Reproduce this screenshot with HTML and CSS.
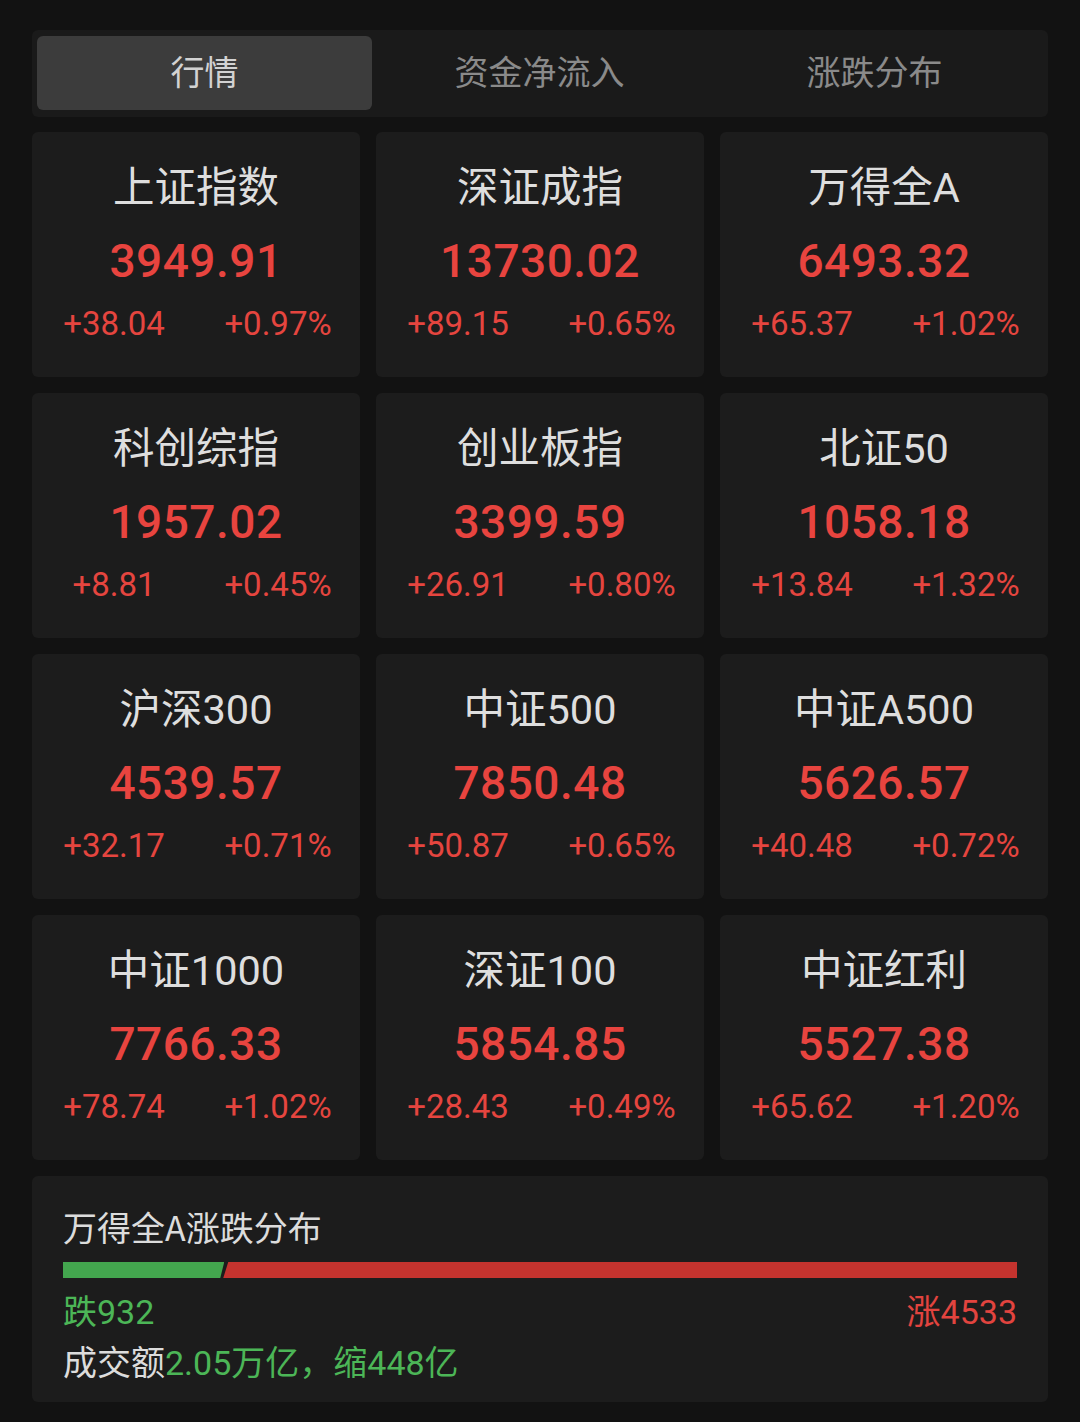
FILE: index.html
```html
<!DOCTYPE html>
<html lang="zh-CN">
<head>
<meta charset="utf-8">
<link rel="stylesheet" href="styles.css">
</head>
<body>
<div class="page">
  <div class="tabs">
    <div class="tab active">行情</div>
    <div class="tab">资金净流入</div>
    <div class="tab">涨跌分布</div>
  </div>
  <div class="grid">
    <div class="card"><div class="name">上证指数</div><div class="value">3949.91</div><div class="changes"><span>+38.04</span><span>+0.97%</span></div></div>
    <div class="card"><div class="name">深证成指</div><div class="value">13730.02</div><div class="changes"><span>+89.15</span><span>+0.65%</span></div></div>
    <div class="card"><div class="name">万得全A</div><div class="value">6493.32</div><div class="changes"><span>+65.37</span><span>+1.02%</span></div></div>
    <div class="card"><div class="name">科创综指</div><div class="value">1957.02</div><div class="changes"><span>+8.81</span><span>+0.45%</span></div></div>
    <div class="card"><div class="name">创业板指</div><div class="value">3399.59</div><div class="changes"><span>+26.91</span><span>+0.80%</span></div></div>
    <div class="card"><div class="name">北证50</div><div class="value">1058.18</div><div class="changes"><span>+13.84</span><span>+1.32%</span></div></div>
    <div class="card"><div class="name">沪深300</div><div class="value">4539.57</div><div class="changes"><span>+32.17</span><span>+0.71%</span></div></div>
    <div class="card"><div class="name">中证500</div><div class="value">7850.48</div><div class="changes"><span>+50.87</span><span>+0.65%</span></div></div>
    <div class="card"><div class="name">中证A500</div><div class="value">5626.57</div><div class="changes"><span>+40.48</span><span>+0.72%</span></div></div>
    <div class="card"><div class="name">中证1000</div><div class="value">7766.33</div><div class="changes"><span>+78.74</span><span>+1.02%</span></div></div>
    <div class="card"><div class="name">深证100</div><div class="value">5854.85</div><div class="changes"><span>+28.43</span><span>+0.49%</span></div></div>
    <div class="card"><div class="name">中证红利</div><div class="value">5527.38</div><div class="changes"><span>+65.62</span><span>+1.20%</span></div></div>
  </div>
  <div class="dist">
    <div class="dist-title">万得全A涨跌分布</div>
    <div class="bar"><div class="bar-down" style="width:16.9%"></div><div class="bar-up"></div></div>
    <div class="counts"><span class="down">跌932</span><span class="up">涨4533</span></div>
    <div class="turnover">成交额<span class="down">2.05万亿，缩448亿</span></div>
  </div>
</div>
</body>
</html>
```
FILE: styles.css
```css
* { box-sizing: border-box; }
html, body { margin: 0; padding: 0; }
body {
  background: #121212;
  width: 1080px;
  height: 1422px;
  overflow: hidden;
  font-family: Roboto, "Noto Sans CJK SC", sans-serif;
}
.page {
  padding: 30px 32px 0 32px;
}
.tabs {
  display: grid;
  grid-template-columns: repeat(3, 1fr);
  height: 87px;
  padding: 6px 6px 7px 5px;
  background: #1a1a1a;
  border-radius: 6px;
  margin-bottom: 15px;
}
.tab {
  display: flex;
  align-items: center;
  justify-content: center;
  padding-bottom: 5px;
  font-family: "Noto Sans CJK SC", sans-serif;
  font-size: 34px;
  color: #8a8a8a;
  border-radius: 6px;
}
.tab.active {
  background: #3c3c3c;
  color: #d2d2d2;
}
.grid {
  display: grid;
  grid-template-columns: repeat(3, 1fr);
  grid-auto-rows: 245px;
  column-gap: 16px;
  row-gap: 16px;
}
.card {
  background: #1c1c1c;
  border-radius: 6px;
  padding-top: 30px;
  text-align: center;
}
.name {
  font-family: Roboto, "Noto Sans CJK SC", sans-serif;
  font-size: 41.5px;
  line-height: 52px;
  color: #dedede;
}
.value {
  margin-top: 19px;
  font-size: 46px;
  line-height: 56px;
  font-weight: 500;
  color: #e8443f;
  letter-spacing: 0.5px;
}
.changes {
  margin-top: 13px;
  display: grid;
  grid-template-columns: 1fr 1fr;
  font-size: 33px;
  line-height: 44px;
  color: #e5453f;
}
.dist {
  margin-top: 16px;
  background: #1c1c1c;
  border-radius: 6px;
  height: 226px;
  padding: 28px 31px 0 31px;
}
.dist-title {
  font-family: "Noto Sans CJK SC", sans-serif;
  font-size: 34px;
  line-height: 46px;
  color: #dcdcdc;
}
.bar {
  margin-top: 12px;
  height: 16px;
  display: flex;
}
.bar-down {
  background: #43a64e;
  clip-path: polygon(0 0, 100% 0, calc(100% - 4px) 100%, 0 100%);
}
.bar-up {
  flex: 1;
  background: #c4332e;
  margin-left: -1px;
  clip-path: polygon(5px 0, 100% 0, 100% 100%, 0 100%);
}
.counts {
  display: flex;
  justify-content: space-between;
  margin-top: 14px;
  font-size: 34px;
  line-height: 40px;
}
.down { color: #4cb657; }
.up { color: #e2443f; }
.turnover {
  margin-top: 10px;
  font-size: 34px;
  line-height: 42px;
  color: #dcdcdc;
}
```
